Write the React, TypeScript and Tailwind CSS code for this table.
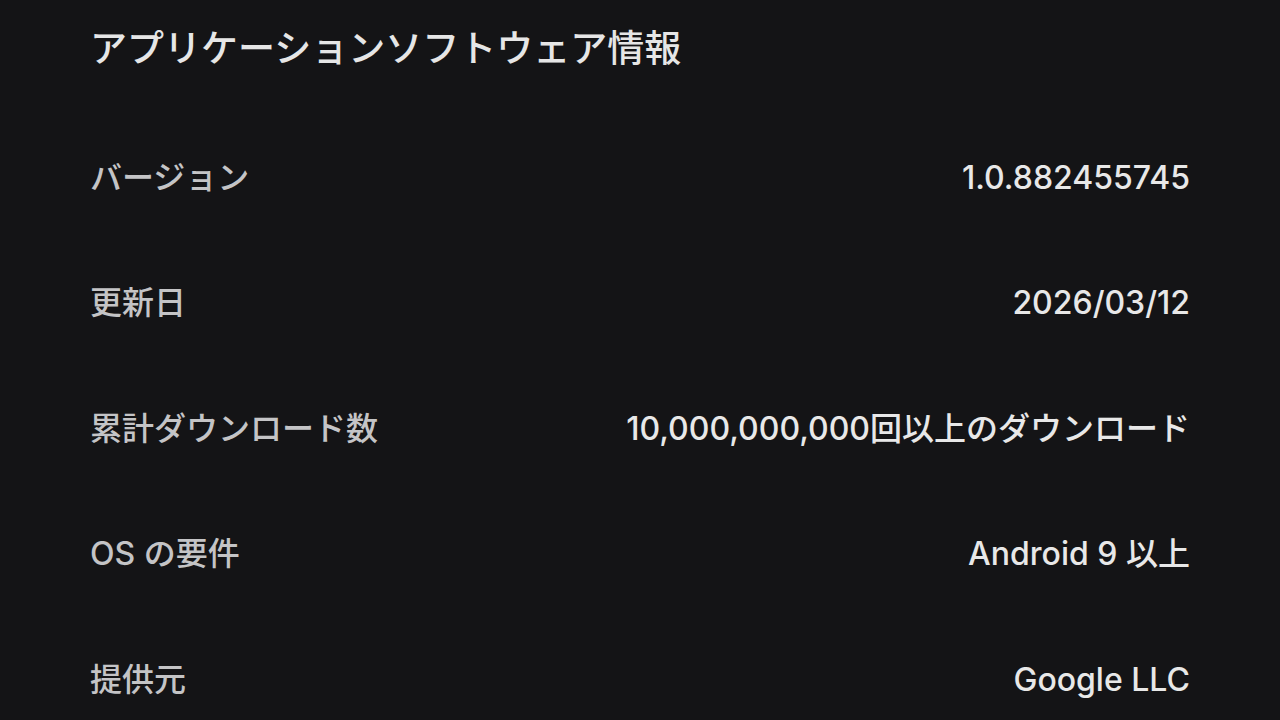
const rows = [
  { label: "バージョン", value: "1.0.882455745" },
  { label: "更新日", value: "2026/03/12" },
  { label: "累計ダウンロード数", value: "10,000,000,000回以上のダウンロード" },
  { label: "OS の要件", value: "Android 9 以上" },
  { label: "提供元", value: "Google LLC" },
];

export default function App() {
  return (
    <div
      className="w-[1280px] h-[720px] overflow-hidden bg-[#141416] px-[90px]"
      style={{ fontFamily: 'Inter, "Noto Sans CJK JP", sans-serif' }}
    >
      <div className="h-[96px] flex items-center">
        <h2 className="text-[37px] font-medium text-[#e6e6e6] leading-none">
          アプリケーションソフトウェア情報
        </h2>
      </div>
      <div className="mt-[19px]">
        {rows.map((row) => (
          <div key={row.label} className="h-[125.5px] flex items-center justify-between">
            <span className="text-[32px] font-medium text-[#c4c4c6] leading-none">{row.label}</span>
            <span className="text-[32px] font-medium text-[#e8e8e8] leading-none">{row.value}</span>
          </div>
        ))}
      </div>
    </div>
  );
}
